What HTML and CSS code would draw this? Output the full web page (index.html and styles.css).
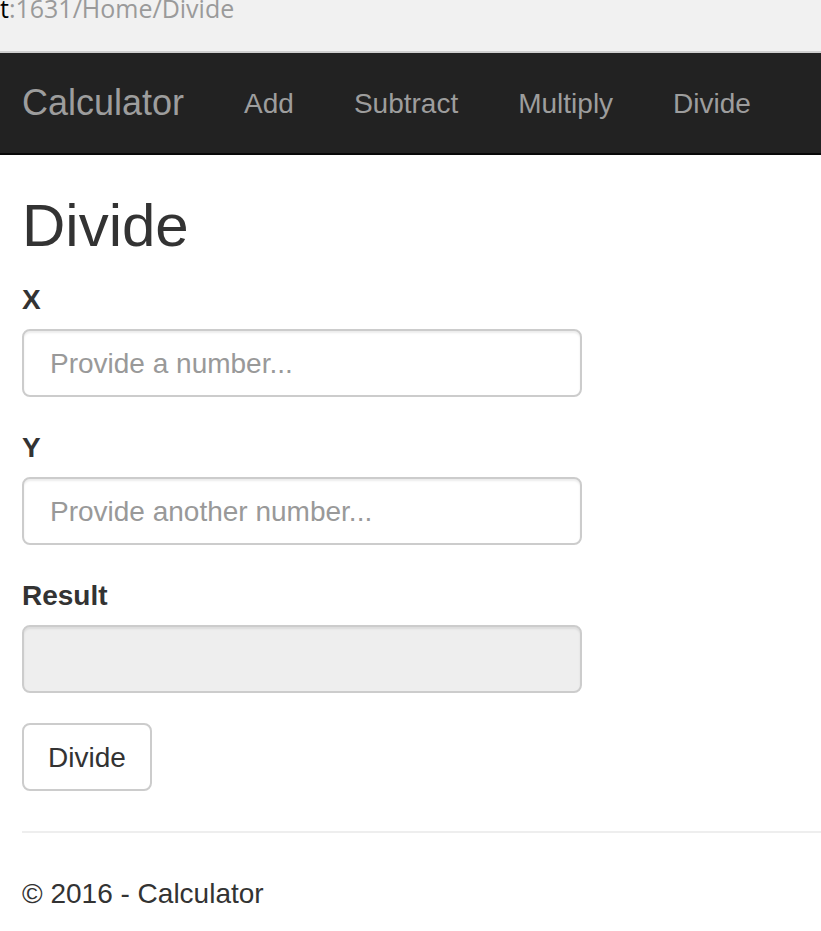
FILE: index.html
```html
<!DOCTYPE html>
<html lang="en">
<head>
<meta charset="utf-8">
<title>Divide - Calculator</title>
<link rel="stylesheet" href="styles.css">
</head>
<body>
<div class="addressbar">
  <div class="url"><span class="url-host">t</span>:1631/Home/Divide</div>
</div>
<nav class="navbar">
  <a class="brand" href="#">Calculator</a>
  <ul class="nav">
    <li><a href="#">Add</a></li>
    <li><a href="#">Subtract</a></li>
    <li><a href="#">Multiply</a></li>
    <li><a href="#">Divide</a></li>
  </ul>
</nav>
<main class="container">
  <h2 class="title">Divide</h2>
  <form class="calc">
    <div class="form-group">
      <label for="x">X</label>
      <input id="x" class="form-control" type="text" placeholder="Provide a number...">
    </div>
    <div class="form-group">
      <label for="y">Y</label>
      <input id="y" class="form-control" type="text" placeholder="Provide another number...">
    </div>
    <div class="form-group">
      <label for="result">Result</label>
      <input id="result" class="form-control" type="text" readonly>
    </div>
    <button type="button" class="btn">Divide</button>
  </form>
  <hr class="rule">
  <footer class="footer">
    <p>&copy; 2016 - Calculator</p>
  </footer>
</main>
</body>
</html>
```
FILE: styles.css
```css
html, body {
  margin: 0;
  padding: 0;
  background: #fff;
  overflow-x: hidden;
}

body {
  font-family: "Liberation Sans", Arial, sans-serif;
  font-size: 28px;
  line-height: 40px;
  color: #333;
}

.addressbar {
  height: 51px;
  background: #f1f1f1;
  border-bottom: 2px solid #cfcfcf;
  overflow: hidden;
}

.url {
  margin-top: -4px;
  font-family: "Open Sans", "Noto Sans", sans-serif;
  font-size: 25px;
  line-height: 25px;
  color: #9a9a9a;
  white-space: nowrap;
}

.url-host {
  color: #000;
}

.navbar {
  display: flex;
  align-items: flex-start;
  height: 100px;
  background: #222;
  border-bottom: 2px solid #080808;
  padding-left: 22px;
}

.brand {
  display: block;
  padding: 30px 30px 30px 0;
  font-size: 36px;
  line-height: 40px;
  color: #9d9d9d;
  text-decoration: none;
}

.nav {
  display: flex;
  list-style: none;
  margin: 0;
  padding: 0;
}

.nav a {
  display: block;
  padding: 31px 30px 29px;
  font-size: 28px;
  line-height: 40px;
  color: #9d9d9d;
  text-decoration: none;
}

.container {
  padding-left: 22px;
  width: 840px;
}

.title {
  margin: 38px 0 20px;
  font-size: 60px;
  line-height: 66px;
  font-weight: 500;
  color: #333;
}

.form-group {
  margin-bottom: 30px;
}

.form-group label {
  display: inline-block;
  padding-top: 1px;
  margin-bottom: 9px;
  font-weight: bold;
}

.form-control {
  display: block;
  box-sizing: border-box;
  width: 560px;
  height: 68px;
  padding: 13px 26px 11px;
  font-family: "Liberation Sans", Arial, sans-serif;
  font-size: 28px;
  line-height: 40px;
  color: #555;
  background: #fff;
  border: 2px solid #ccc;
  border-radius: 8px;
  box-shadow: inset 0 2px 2px rgba(0, 0, 0, 0.075);
  outline: none;
}

.form-control::placeholder {
  color: #999;
}

.form-control[readonly] {
  background: #eee;
}

.btn {
  display: block;
  box-sizing: border-box;
  height: 68px;
  padding: 13px 24px 11px;
  font-family: "Liberation Sans", Arial, sans-serif;
  font-size: 28px;
  line-height: 40px;
  color: #333;
  background: #fff;
  border: 2px solid #ccc;
  border-radius: 8px;
}

.rule {
  margin: 40px 0;
  border: 0;
  border-top: 2px solid #eee;
}

.footer p {
  margin: 0 0 20px;
  padding-top: 1px;
}
```
